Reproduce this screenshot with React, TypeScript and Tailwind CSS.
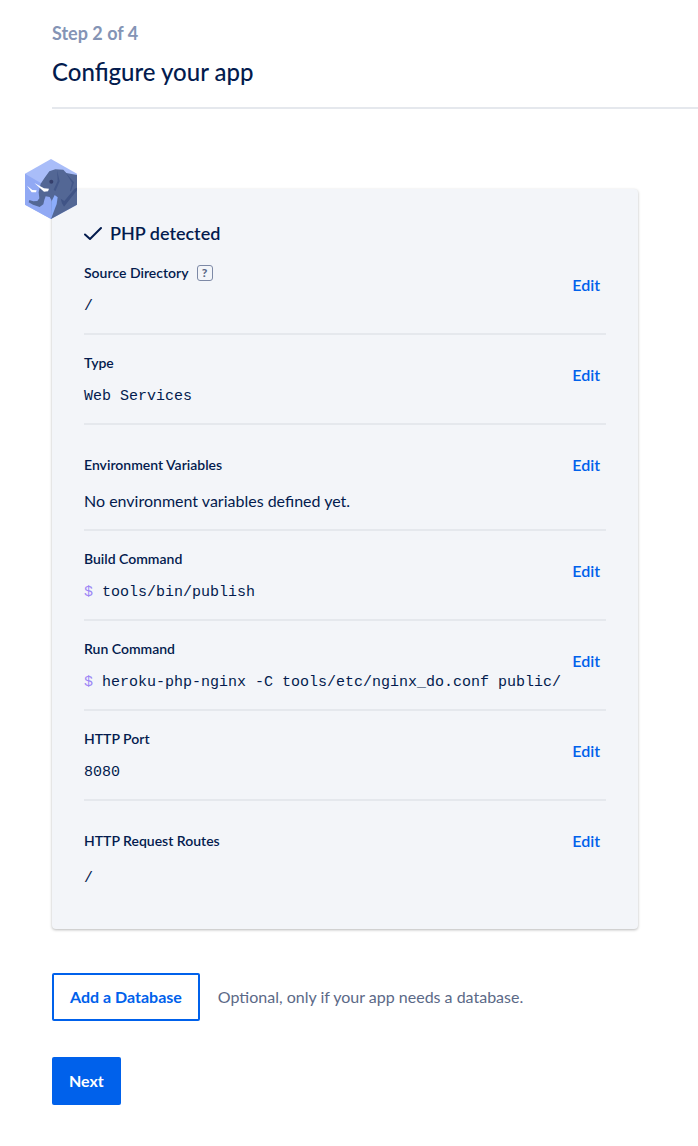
import React from 'react';

type Setting = {
  label: string;
  value: string;
  kind?: 'text' | 'command';
  help?: boolean;
  spacious?: boolean;
};

const settings: Setting[] = [
  { label: 'Source Directory', value: '/', help: true },
  { label: 'Type', value: 'Web Services' },
  { label: 'Environment Variables', value: 'No environment variables defined yet.', kind: 'text', spacious: true },
  { label: 'Build Command', value: 'tools/bin/publish', kind: 'command' },
  { label: 'Run Command', value: 'heroku-php-nginx -C tools/etc/nginx_do.conf public/', kind: 'command' },
  { label: 'HTTP Port', value: '8080' },
  { label: 'HTTP Request Routes', value: '/', spacious: true },
];

const ElephantLogo: React.FC = () => (
  <svg
    viewBox="45 27 156 180"
    className="absolute -left-[27px] -top-[30px] h-[60px] w-[52px]"
    aria-hidden="true"
  >
    <path d="M123 27 201 71V164L123 207 45 164V71Z" fill="#a9bdf9" />
    <path d="M45 71 123 117V207L45 164Z" fill="#91a9f4" />
    {/* Head, trunk and body */}
    <path
      d="M104 83 118 64 136 58 160 59 169 69 201 75V164L123 207 124 150 119 141 107 139 103 150 100 163 89 171 69 164 56 157 58 150 70 154 82 153 88 145 86 127 92 101Z"
      fill="#536795"
    />
    {/* Ear folds and shoulder */}
    <path d="M141 60 149 94 136 124 131 119 143 93Z" fill="#435789" />
    <path d="M167 68 192 97 183 124 180 122 186 98Z" fill="#435789" />
    <path d="M152 146 163 153 194 116 201 113V121L162 170 156 160Z" fill="#405486" />
    <path d="M123 207 124 155 134 135 143 142 140 162Z" fill="#8cadfb" />
    <circle cx="124" cy="95" r="6" fill="#343e6b" />
    {/* Tusks */}
    <path d="M73 99 102 115 117 116 114 124 102 125Z" fill="#fff" />
    <path d="M51 107 67 120 80 121 78 127 65 127Z" fill="#fff" />
  </svg>
);

const SettingRow: React.FC<{ setting: Setting }> = ({ setting }) => {
  const { label, value, kind, help, spacious } = setting;

  return (
    <div
      className={`flex items-start justify-between border-b-2 border-[#e5e8ed] last:border-b-0 last:pb-1 ${
        kind === 'text' ? 'pb-4' : 'pb-3'
      }`}
    >
      <div className={spacious ? 'pt-7' : 'pt-4'}>
        <dt className="flex items-center gap-2 text-sm leading-6 font-semibold">
          {label}
          {help && (
            <button
              type="button"
              aria-label="About the source directory"
              className="flex h-4 w-4 items-center justify-center rounded-[3px] border border-[#7d89a6] text-xs leading-none font-black text-[#5b6987]"
            >
              ?
            </button>
          )}
        </dt>
        <dd
          className={`${spacious ? 'mt-3' : 'mt-2'} ${
            kind === 'text' ? 'text-base leading-6' : "font-['Liberation_Mono',monospace] text-[15px] leading-7"
          }`}
        >
          {kind === 'command' && <span className="text-[#9c86f5]">$ </span>}
          {value}
        </dd>
      </div>
      <a href="#edit" aria-label={`Edit ${label}`} className="mt-7 pr-1.5 text-base leading-6 font-semibold text-[#0061eb]">
        Edit
      </a>
    </div>
  );
};

const App: React.FC = () => {
  return (
    <main className="min-h-screen bg-white pt-[21px] pb-10 pl-13 font-['Lato',sans-serif] text-[#031b4e]">
      <header className="border-b-2 border-[#e5e8ed] pb-[19px]">
        <p className="text-lg leading-6 font-bold text-[#8494b5]">Step 2 of 4</p>
        <h1 className="mt-[11px] text-2xl leading-8 font-medium">Configure your app</h1>
      </header>

      <section className="relative mt-20 mr-15 rounded-sm bg-[#f3f5f9] p-8 shadow-[0_1px_3px_rgba(0,0,0,0.28)]">
        <ElephantLogo />
        <h2 className="flex items-center gap-2 text-lg leading-6 font-semibold">
          <svg viewBox="0 0 18 24" className="h-6 w-[18px]" fill="none" stroke="currentColor" strokeWidth="2" aria-hidden="true">
            <path d="M1 13.5 6 18 17 7" strokeLinecap="round" strokeLinejoin="round" />
          </svg>
          PHP detected
        </h2>
        <dl>
          {settings.map((setting) => (
            <SettingRow key={setting.label} setting={setting} />
          ))}
        </dl>
      </section>

      <div className="mt-11 flex items-center gap-[18px]">
        <button
          type="button"
          className="h-12 rounded-xs border-2 border-[#0061eb] px-4 text-base font-bold text-[#0061eb]"
        >
          Add a Database
        </button>
        <p className="text-base leading-6 text-[#5b6987]">Optional, only if your app needs a database.</p>
      </div>

      <button type="button" className="mt-9 h-12 rounded-xs bg-[#0061eb] px-[17px] text-base font-bold text-white">
        Next
      </button>
    </main>
  );
};

export default App;
